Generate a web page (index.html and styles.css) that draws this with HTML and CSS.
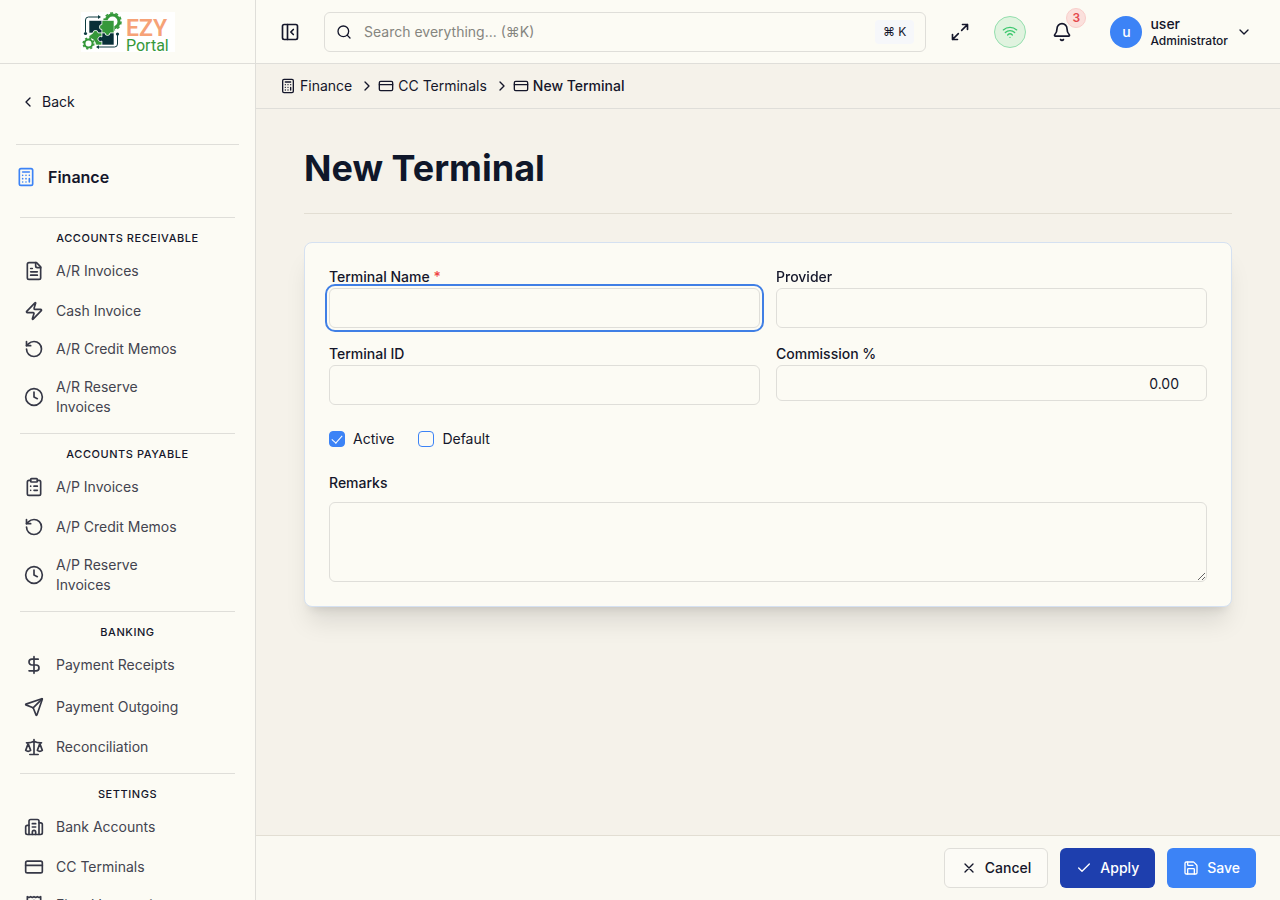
FILE: index.html
```html
<!DOCTYPE html>
<html lang="en">
<head>
  <meta charset="UTF-8">
  <meta name="viewport" content="width=device-width, initial-scale=1.0">
  <title>New Terminal - EZY Portal</title>
  <link rel="stylesheet" href="styles.css">
</head>
<body>
  <!-- shared icons -->
  <svg class="sprite" aria-hidden="true">
    <symbol id="i-calc" viewBox="0 0 24 24"><rect width="16" height="20" x="4" y="2" rx="2"/><path d="M8 6h8M16 14v4M16 10h.01M12 10h.01M8 10h.01M12 14h.01M8 14h.01M12 18h.01M8 18h.01"/></symbol>
    <symbol id="i-card" viewBox="0 0 24 24"><rect width="20" height="14" x="2" y="5" rx="2"/><path d="M2 10h20"/></symbol>
    <symbol id="i-left" viewBox="0 0 24 24"><path d="m15 18-6-6 6-6"/></symbol>
    <symbol id="i-right" viewBox="0 0 24 24"><path d="m9 18 6-6-6-6"/></symbol>
    <symbol id="i-undo" viewBox="0 0 24 24"><path d="M3 12a9 9 0 1 0 9-9 9.75 9.75 0 0 0-6.74 2.74L3 8"/><path d="M3 3v5h5"/></symbol>
    <symbol id="i-clock" viewBox="0 0 24 24"><circle cx="12" cy="12" r="10"/><path d="M12 6v6l4 2"/></symbol>
  </svg>

  <div class="app">
    <aside class="sidebar">
      <a class="brand" href="#" aria-label="EZY Portal">
        <svg class="logo" viewBox="0 0 94 40">
          <rect width="94" height="40" fill="#fff"/>
          <g fill="none" stroke="#0d3b40" stroke-width="1">
            <path d="M4.500 20V8q0-3 3-3H18"/>
            <path d="M36.500 23v9q0 3-3 3H17"/>
          </g>
          <path d="M17 3l3 2-3 2zM18 33l-3 2 3 2z" fill="#0d3b40"/>
          <circle cx="4.500" cy="21.500" r="1.600" fill="#0d3b40"/>
          <circle cx="36.500" cy="22" r="1.600" fill="#0d3b40"/>
          <circle cx="31.500" cy="9.500" r="6.500" fill="none" stroke="#35983a" stroke-width="3"/>
          <circle cx="31.500" cy="9.500" r="8.500" fill="none" stroke="#35983a" stroke-width="1.600" stroke-dasharray="3 2.340"/>
          <g stroke="#fff" stroke-width=".6">
            <path d="M8 8.500h13v4a2.500 2.500 0 1 0 0 5V21h-4a2.500 2.500 0 1 0-5 0H8z" fill="#082f38"/>
            <path d="M21 8.500h12V21h-4a2.500 2.500 0 1 1-5 0h-3v-3.500a2.500 2.500 0 1 1 0-5z" fill="#35983a"/>
            <path d="M8 24l4-3a2.500 2.500 0 1 1 5 0h4v4a2.500 2.500 0 1 0 0 4v4h-6q-1-6-7-7z" fill="#35983a"/>
            <path d="M21 21h3a2.500 2.500 0 0 0 5 0h4v12H21v-4a2.500 2.500 0 1 1 0-4z" fill="#082f38"/>
          </g>
          <circle cx="7.500" cy="31.500" r="6" fill="#fff"/>
          <circle cx="7.500" cy="31.500" r="4" fill="none" stroke="#35983a" stroke-width="2"/>
          <circle cx="7.500" cy="31.500" r="5.400" fill="none" stroke="#35983a" stroke-width="1.400" stroke-dasharray="2.200 2.040"/>
          <text class="logo-ezy" x="45" y="24">EZY</text>
          <text class="logo-portal" x="45" y="39">Portal</text>
        </svg>
      </a>

      <nav class="side-nav" aria-label="Finance">
        <a class="back" href="#"><svg class="icon icon-sm"><use href="#i-left"/></svg>Back</a>
        <a class="module" href="#"><svg class="icon"><use href="#i-calc"/></svg>Finance</a>

        <section class="nav-group">
          <h2>Accounts Receivable</h2>
          <a class="nav-item spaced" href="#"><svg class="icon" viewBox="0 0 24 24"><path d="M15 2H6a2 2 0 0 0-2 2v16a2 2 0 0 0 2 2h12a2 2 0 0 0 2-2V7Z"/><path d="M14 2v4a2 2 0 0 0 2 2h4M10 9H8M16 13H8M16 17H8"/></svg><span>A/R Invoices</span></a>
          <a class="nav-item" href="#"><svg class="icon" viewBox="0 0 24 24"><path d="M4 14a1 1 0 0 1-.78-1.63l9.9-10.2a.5.5 0 0 1 .86.46l-1.92 6.02A1 1 0 0 0 13 10h7a1 1 0 0 1 .78 1.63l-9.9 10.2a.5.5 0 0 1-.86-.46l1.92-6.02A1 1 0 0 0 11 14z"/></svg><span>Cash Invoice</span></a>
          <a class="nav-item" href="#"><svg class="icon"><use href="#i-undo"/></svg><span>A/R Credit Memos</span></a>
          <a class="nav-item" href="#"><svg class="icon"><use href="#i-clock"/></svg><span>A/R Reserve Invoices</span></a>
        </section>

        <section class="nav-group">
          <h2>Accounts Payable</h2>
          <a class="nav-item spaced" href="#"><svg class="icon" viewBox="0 0 24 24"><rect width="8" height="4" x="8" y="2" rx="1"/><path d="M16 4h2a2 2 0 0 1 2 2v14a2 2 0 0 1-2 2H6a2 2 0 0 1-2-2V6a2 2 0 0 1 2-2h2M12 11h4M12 16h4M8 11h.01M8 16h.01"/></svg><span>A/P Invoices</span></a>
          <a class="nav-item" href="#"><svg class="icon"><use href="#i-undo"/></svg><span>A/P Credit Memos</span></a>
          <a class="nav-item" href="#"><svg class="icon"><use href="#i-clock"/></svg><span>A/P Reserve Invoices</span></a>
        </section>

        <section class="nav-group">
          <h2>Banking</h2>
          <a class="nav-item spaced-lg" href="#"><svg class="icon" viewBox="0 0 24 24"><path d="M12 2v20M17 5H9.500a3.500 3.500 0 0 0 0 7h5a3.500 3.500 0 0 1 0 7H6"/></svg><span>Payment Receipts</span></a>
          <a class="nav-item spaced" href="#"><svg class="icon" viewBox="0 0 24 24"><path d="M14.536 21.686a.5.5 0 0 0 .937-.024l6.500-19a.496.496 0 0 0-.635-.635l-19 6.500a.5.5 0 0 0-.024.937l7.930 3.180a2 2 0 0 1 1.112 1.110z"/><path d="m21.854 2.147-10.940 10.939"/></svg><span>Payment Outgoing</span></a>
          <a class="nav-item" href="#"><svg class="icon" viewBox="0 0 24 24"><path d="M12 3v18M19 8l3 8a5 5 0 0 1-6 0zV7M3 7h1a17 17 0 0 0 8-2 17 17 0 0 0 8 2h1M5 8l3 8a5 5 0 0 1-6 0zV7M7 21h10"/></svg><span>Reconciliation</span></a>
        </section>

        <section class="nav-group">
          <h2>Settings</h2>
          <a class="nav-item spaced" href="#"><svg class="icon" viewBox="0 0 24 24"><path d="M10 12h4M10 8h4M14 21v-3a2 2 0 0 0-4 0v3"/><path d="M6 10H4a2 2 0 0 0-2 2v7a2 2 0 0 0 2 2h16a2 2 0 0 0 2-2V9a2 2 0 0 0-2-2h-2"/><path d="M6 21V5a2 2 0 0 1 2-2h8a2 2 0 0 1 2 2v16"/></svg><span>Bank Accounts</span></a>
          <a class="nav-item" href="#"><svg class="icon"><use href="#i-card"/></svg><span>CC Terminals</span></a>
          <a class="nav-item" href="#"><svg class="icon" viewBox="0 0 24 24"><path d="M4 2v20l2-1 2 1 2-1 2 1 2-1 2 1 2-1 2 1V2l-2 1-2-1-2 1-2-1-2 1-2-1-2 1Z"/><path d="M16 8h-6a2 2 0 1 0 0 4h4a2 2 0 1 1 0 4H8M12 17.500v-11"/></svg><span>Fiscal Integration</span></a>
        </section>
      </nav>
    </aside>

    <div class="page">
      <header class="topbar">
        <button class="icon-btn" type="button" aria-label="Collapse sidebar">
          <svg class="icon" viewBox="0 0 24 24"><rect width="18" height="18" x="3" y="3" rx="2"/><path d="M9 3v18M16 15l-3-3 3-3"/></svg>
        </button>
        <div class="search">
          <svg class="icon icon-sm" viewBox="0 0 24 24"><circle cx="11" cy="11" r="8"/><path d="m21 21-4.300-4.300"/></svg>
          <input type="search" placeholder="Search everything... (⌘K)" aria-label="Search everything">
          <kbd>⌘ K</kbd>
        </div>
        <button class="icon-btn" type="button" aria-label="Full screen">
          <svg class="icon" viewBox="0 0 24 24"><path d="M15 3h6v6M21 3l-7 7M3 21l7-7M9 21H3v-6"/></svg>
        </button>
        <span class="online" role="img" aria-label="Online">
          <svg class="icon icon-sm" viewBox="0 0 24 24"><path d="M12 20h.01M2 8.820a15 15 0 0 1 20 0M5 12.859a10 10 0 0 1 14 0M8.500 16.429a5 5 0 0 1 7 0"/></svg>
        </span>
        <button class="icon-btn bell" type="button" aria-label="Notifications">
          <svg class="icon" viewBox="0 0 24 24"><path d="M10.268 21a2 2 0 0 0 3.464 0"/><path d="M3.262 15.326A1 1 0 0 0 4 17h16a1 1 0 0 0 .740-1.673C19.410 13.956 18 12.499 18 8A6 6 0 0 0 6 8c0 4.499-1.411 5.956-2.738 7.326"/></svg>
          <span class="badge">3</span>
        </button>
        <button class="user" type="button">
          <span class="avatar">u</span>
          <span class="user-text"><span class="user-name">user</span><span class="user-role">Administrator</span></span>
          <svg class="icon icon-sm" viewBox="0 0 24 24"><path d="m6 9 6 6 6-6"/></svg>
        </button>
      </header>

      <nav class="breadcrumb" aria-label="Breadcrumb">
        <a href="#"><svg class="icon icon-sm"><use href="#i-calc"/></svg>Finance</a>
        <svg class="icon icon-sm sep"><use href="#i-right"/></svg>
        <a href="#"><svg class="icon icon-sm"><use href="#i-card"/></svg>CC Terminals</a>
        <svg class="icon icon-sm sep"><use href="#i-right"/></svg>
        <a class="current" href="#" aria-current="page"><svg class="icon icon-sm"><use href="#i-card"/></svg>New Terminal</a>
      </nav>

      <main class="content">
        <h1>New Terminal</h1>
        <form class="card" id="terminal-form">
          <div class="field">
            <label for="name">Terminal Name <span class="required">*</span></label>
            <input id="name" type="text" autocomplete="off" autofocus>
          </div>
          <div class="field">
            <label for="provider">Provider</label>
            <input id="provider" type="text">
          </div>
          <div class="field">
            <label for="terminal-id">Terminal ID</label>
            <input id="terminal-id" type="text">
          </div>
          <div class="field">
            <label for="commission">Commission %</label>
            <input class="number" id="commission" type="text" inputmode="decimal" value="0.00">
          </div>
          <div class="checks">
            <label><input type="checkbox" checked>Active</label>
            <label><input type="checkbox">Default</label>
          </div>
          <div class="field remarks">
            <label for="remarks">Remarks</label>
            <textarea id="remarks"></textarea>
          </div>
        </form>
      </main>

      <footer class="actions">
        <button class="btn" type="button"><svg class="icon icon-sm" viewBox="0 0 24 24"><path d="M18 6 6 18M6 6l12 12"/></svg>Cancel</button>
        <button class="btn btn-apply" type="button"><svg class="icon icon-sm" viewBox="0 0 24 24"><path d="M20 6 9 17l-5-5"/></svg>Apply</button>
        <button class="btn btn-save" type="submit" form="terminal-form"><svg class="icon icon-sm" viewBox="0 0 24 24"><path d="M15.200 3a2 2 0 0 1 1.400.6l3.800 3.800a2 2 0 0 1 .6 1.400V19a2 2 0 0 1-2 2H5a2 2 0 0 1-2-2V5a2 2 0 0 1 2-2z"/><path d="M17 21v-7a1 1 0 0 0-1-1H8a1 1 0 0 0-1 1v7M7 3v4a1 1 0 0 0 1 1h7"/></svg>Save</button>
      </footer>
    </div>
  </div>
</body>
</html>
```
FILE: styles.css
```css
:root {
  --surface: #fcfbf4;
  --bg: #f5f2ea;
  --line: #dfded9;
  --text: #14162a;
  --muted: #43444f;
  --blue: #3c83f6;
}
* { margin: 0; padding: 0; box-sizing: border-box; }
body {
  font-family: Inter, "Liberation Sans", sans-serif;
  font-size: 14px;
  line-height: 20px;
  color: var(--text);
  background: var(--bg);
}
a { color: inherit; text-decoration: none; }
button, input, textarea { font: inherit; color: inherit; }
button { cursor: pointer; }
.sprite { display: none; }
.icon {
  width: 20px;
  height: 20px;
  flex-shrink: 0;
  fill: none;
  stroke: currentColor;
  stroke-width: 2;
  stroke-linecap: round;
  stroke-linejoin: round;
}
.icon-sm { width: 16px; height: 16px; }

.app { display: flex; height: 100vh; overflow: hidden; }

/* sidebar */
.sidebar {
  width: 256px;
  flex-shrink: 0;
  display: flex;
  flex-direction: column;
  background: var(--surface);
  border-right: 1px solid var(--line);
}
.brand {
  height: 64px;
  flex-shrink: 0;
  display: flex;
  align-items: center;
  justify-content: center;
  border-bottom: 1px solid var(--line);
}
.logo { width: 94px; height: 40px; overflow: visible; }
.logo-ezy { font: 600 23px Roboto, sans-serif; fill: #f6a277; }
.logo-portal { font: 400 16px Roboto, sans-serif; fill: #35983a; }
.side-nav { flex: 1; min-height: 0; overflow: hidden; padding: 0 16px; }
.back {
  display: flex;
  align-items: center;
  gap: 6px;
  height: 81px;
  padding: 0 4px 4px;
  border-bottom: 1px solid var(--line);
}
.module {
  display: flex;
  align-items: center;
  gap: 12px;
  height: 72px;
  padding-bottom: 8px;
  font-size: 16px;
  font-weight: 600;
}
.module .icon { color: var(--blue); }
.nav-group {
  margin: 0 4px 8px;
  border-top: 1px solid var(--line);
  display: flex;
  flex-direction: column;
  gap: 2px;
}
.nav-group h2 {
  padding: 12px 0 4px;
  font-size: 11px;
  line-height: 17px;
  font-weight: 500;
  letter-spacing: 0.05em;
  text-align: center;
  text-transform: uppercase;
}
.nav-item {
  display: flex;
  align-items: center;
  gap: 12px;
  padding: 8px 48px 8px 4px;
  color: var(--muted);
}
.nav-item .icon { color: #363846; }
.spaced { margin-bottom: 2px; }
.spaced-lg { margin-bottom: 4px; }

/* top bar */
.page { flex: 1; min-width: 0; display: flex; flex-direction: column; }
.topbar {
  height: 64px;
  flex-shrink: 0;
  display: flex;
  align-items: center;
  gap: 16px;
  padding: 0 16px;
  background: var(--surface);
  border-bottom: 1px solid var(--line);
}
.icon-btn {
  width: 36px;
  height: 36px;
  display: flex;
  align-items: center;
  justify-content: center;
  border: none;
  background: none;
}
.search {
  flex: 1;
  height: 40px;
  display: flex;
  align-items: center;
  gap: 12px;
  padding: 0 11px;
  border: 1px solid var(--line);
  border-radius: 6px;
}
.search input { flex: 1; min-width: 0; border: none; outline: none; background: none; }
.search input::placeholder { color: #85857f; opacity: 1; }
.search kbd {
  padding: 2px 8px;
  border-radius: 4px;
  background: #f6f7fa;
  font-family: inherit;
  font-size: 12px;
}
.online {
  width: 32px;
  height: 32px;
  display: flex;
  align-items: center;
  justify-content: center;
  border: 1px solid #94dfae;
  border-radius: 50%;
  background: #e0f3df;
  color: #3cc76d;
}
.bell { position: relative; width: 40px; height: 40px; }
.badge {
  position: absolute;
  top: -4px;
  right: -4px;
  width: 20px;
  height: 20px;
  border: 1px solid #f9cdca;
  border-radius: 50%;
  background: #fbe0dc;
  color: #e5484d;
  font-size: 12px;
  line-height: 18px;
  font-weight: 600;
  text-align: center;
}
.user {
  display: flex;
  align-items: center;
  gap: 8px;
  padding: 0 12px;
  border: none;
  background: none;
}
.avatar {
  width: 32px;
  height: 32px;
  border-radius: 50%;
  background: var(--blue);
  color: #fff;
  line-height: 32px;
  font-weight: 500;
}
.user-text { display: flex; flex-direction: column; text-align: left; font-weight: 500; }
.user-name { line-height: 18px; }
.user-role { font-size: 12px; line-height: 16px; }

.breadcrumb {
  height: 45px;
  flex-shrink: 0;
  display: flex;
  align-items: center;
  padding: 0 24px;
  border-bottom: 1px solid var(--line);
}
.breadcrumb a { display: flex; align-items: center; gap: 4px; }
.breadcrumb .sep { margin: 0 3px 0 7px; }
.breadcrumb .current { font-weight: 500; }

/* form */
.content { flex: 1; min-height: 0; overflow: auto; padding: 39px 48px; }
.content h1 {
  padding-bottom: 25px;
  margin-bottom: 28px;
  border-bottom: 1px solid #e2ded3;
  color: #0f172a;
  font-size: 36px;
  line-height: 40px;
  font-weight: 700;
}
.card {
  display: grid;
  grid-template-columns: 1fr 1fr;
  gap: 16px;
  padding: 24px;
  background: var(--surface);
  border: 1px solid #d5e1f1;
  border-radius: 8px;
  box-shadow: 0 20px 25px -5px rgba(0, 0, 0, 0.1), 0 8px 10px -6px rgba(0, 0, 0, 0.1);
}
.field { display: flex; flex-direction: column; }
.field label { line-height: 20px; padding-bottom: 1px; font-weight: 500; }
.required { color: #ef4444; }
.field input, .field textarea {
  width: 100%;
  height: 40px;
  padding: 0 12px;
  border: 1px solid var(--line);
  border-radius: 6px;
  background: none;
}
.field input:focus { outline: 2px solid #407fe5; outline-offset: 2px; }
.field .number { height: 36px; padding-right: 27px; text-align: right; }
.field textarea { height: 80px; padding: 8px 12px; resize: vertical; }
.remarks, .checks { grid-column: 1 / -1; }
.remarks { gap: 8px; }
.checks { display: flex; align-items: center; gap: 24px; height: 36px; }
.checks label { display: flex; align-items: center; gap: 8px; }
.checks input {
  appearance: none;
  width: 16px;
  height: 16px;
  display: grid;
  place-items: center;
  border: 1px solid var(--blue);
  border-radius: 4px;
}
.checks input:checked { background: var(--blue); }
.checks input:checked::after {
  content: "";
  width: 5px;
  height: 9px;
  margin-bottom: 2px;
  border: solid #fff;
  border-width: 0 1px 1px 0;
  transform: rotate(42deg);
}

/* bottom buttons */
.actions {
  flex-shrink: 0;
  display: flex;
  justify-content: flex-end;
  gap: 12px;
  padding: 12px 24px;
  background: #faf9f2;
  border-top: 1px solid #e2ded3;
}
.btn {
  height: 40px;
  display: flex;
  align-items: center;
  gap: 8px;
  padding: 0 16px;
  border: 1px solid var(--line);
  border-radius: 6px;
  background: #fcfbf6;
  font-weight: 500;
}
.btn-apply, .btn-save { border: none; color: #fff; }
.btn-apply { background: #1e3fae; }
.btn-save { background: var(--blue); }
```
